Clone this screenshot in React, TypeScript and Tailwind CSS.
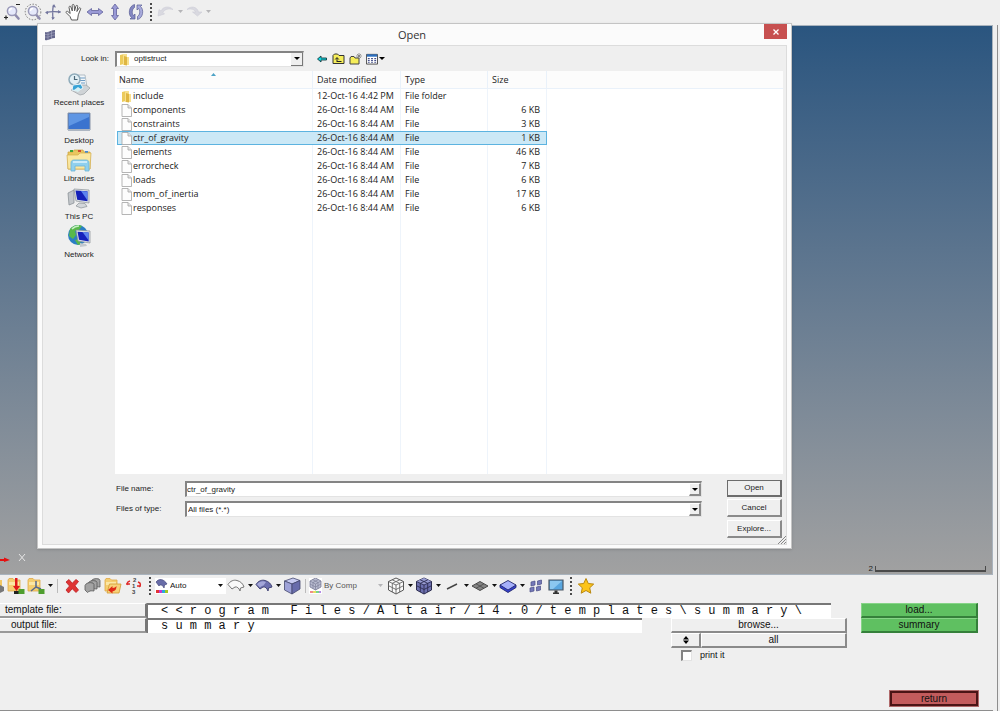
import { useState, type ReactNode } from "react";

const files = [
  { name: "include", date: "12-Oct-16 4:42 PM", type: "File folder", size: "" },
  { name: "components", date: "26-Oct-16 8:44 AM", type: "File", size: "6 KB" },
  { name: "constraints", date: "26-Oct-16 8:44 AM", type: "File", size: "3 KB" },
  { name: "ctr_of_gravity", date: "26-Oct-16 8:44 AM", type: "File", size: "1 KB" },
  { name: "elements", date: "26-Oct-16 8:44 AM", type: "File", size: "46 KB" },
  { name: "errorcheck", date: "26-Oct-16 8:44 AM", type: "File", size: "7 KB" },
  { name: "loads", date: "26-Oct-16 8:44 AM", type: "File", size: "6 KB" },
  { name: "mom_of_inertia", date: "26-Oct-16 8:44 AM", type: "File", size: "17 KB" },
  { name: "responses", date: "26-Oct-16 8:44 AM", type: "File", size: "6 KB" },
];

function Svg({ size = 18, children }: { size?: number; children: ReactNode }) {
  return (
    <svg width={size} height={size} viewBox="0 0 18 18" fill="none" aria-hidden="true">
      {children}
    </svg>
  );
}

function Tool({ label, children }: { label: string; children: ReactNode }) {
  return (
    <button aria-label={label} className="flex h-5 w-5 shrink-0 items-center justify-center">
      {children}
    </button>
  );
}

function Caret({ label = "More", faded = false }: { label?: string; faded?: boolean }) {
  return (
    <button aria-label={label} className="flex h-5 w-2 shrink-0 items-center justify-center">
      <svg width="5" height="3" viewBox="0 0 5 3" aria-hidden="true">
        <path d="M0 0h5L2.5 3z" fill={faded ? "#b5b5b8" : "#111"} />
      </svg>
    </button>
  );
}

function Dots() {
  return (
    <svg width="10" height="18" viewBox="0 0 10 18" className="shrink-0" aria-hidden="true">
      <path d="M4 0h2v2H4zM4 4h2v2H4zM4 8h2v2H4zM4 12h2v2H4zM4 16h2v2H4z" fill="#4a4a4a" />
    </svg>
  );
}

/* ---------- view toolbar ---------- */

function Lens({ dashed = false }: { dashed?: boolean }) {
  return (
    <Svg>
      {dashed && (
        <circle cx="9" cy="9" r="7.8" stroke="#777" strokeWidth="1" strokeDasharray="1.5 1.5" />
      )}
      <path d="M12 11.500l3.500 4" stroke="#8f8cae" strokeWidth="2.600" strokeLinecap="round" />
      <circle cx="9" cy="8" r="4.600" fill="#e6e9fb" stroke="#9a99b8" strokeWidth="1.500" />
      <path d="M6.500 8A2.500 2.500 0 0 1 9 5.500" stroke="#fff" strokeWidth="1.300" />
      {!dashed && <path d="M1 14.500h4M3 12.500v4M13 1.500h4" stroke="#222" strokeWidth="1.200" />}
    </Svg>
  );
}

function DoubleArrow({ vertical = false }: { vertical?: boolean }) {
  return (
    <Svg>
      <path
        d={
          vertical
            ? "M9 1l3.500 4.500h-2v7h2L9 17l-3.500-4.500h2v-7h-2z"
            : "M1 9l4.500-3.500v2h7v-2L17 9l-4.500 3.500v-2h-7v2z"
        }
        fill="#9a9ad6"
        stroke="#62629c"
        strokeWidth=".8"
      />
    </Svg>
  );
}

function CrossArrows() {
  return (
    <Svg>
      <path d="M9.500 2c-1 4-1 9-.5 14M2 9.500c4-1 9-1 14.500-.5" stroke="#74779f" strokeWidth="1.300" />
      <path d="M10 1l2 3.500-3.500-.5zM8.500 17l-1-3 3.500.5zM1 9.500L4 8v3.500zM17 9l-3-2v3.500z" fill="#74779f" />
    </Svg>
  );
}

function Hand() {
  return (
    <Svg>
      <path
        d="M6.500 17L5 13.500 1.300 9.800c-.8-1 .5-2.200 1.600-1.200l2.300 1.900L4 4.400c-.2-1.300 1.500-1.700 1.900-.4L7.300 8 7.200 2.500c0-1.400 1.900-1.400 2 0l.4 5.300 1.300-4.700c.4-1.300 2-.9 1.800.4l-.8 5 2-3.200c.7-1.100 2.200-.3 1.700.8l-2.300 5.700-.8 5.200z"
        fill="#fff"
        stroke="#5a5a5a"
        strokeWidth="1"
      />
    </Svg>
  );
}

function Rotate() {
  return (
    <Svg>
      <path
        d="M7.500 1.500C1.500 3 1 12 4.500 14.500L3 16h5v-5l-1.500 1.500C4.500 10 5 6 7.500 4.500z"
        fill="#8487c2"
        stroke="#585b93"
        strokeWidth=".7"
      />
      <path
        d="M10.500 16.500c6-1.500 6.500-10.500 3-13L15 2h-5v5l1.500-1.500c2 2.500 1.500 6.500-1 8z"
        fill="#a9abdc"
        stroke="#585b93"
        strokeWidth=".7"
      />
    </Svg>
  );
}

function Undo({ flip = false }: { flip?: boolean }) {
  return (
    <Svg>
      <path
        d={
          flip
            ? "M2 6.500c4-4 10-3 11.500 2.500H17l-4.500 4-5-4h3C9.500 6.500 6 5 2 6.500z"
            : "M16 6.500c-4-4-10-3-12 1.500L2 6.500 1 13l6.500-2-1.500-1.500C7.500 6.500 11 5 16 6.500z"
        }
        fill="#d9d9e0"
        stroke="#cccdd6"
        strokeWidth=".6"
      />
    </Svg>
  );
}

/* ---------- model toolbar ---------- */

function FolderTool({ kind }: { kind: "import" | "axes" | "open" }) {
  return (
    <Svg>
      <path d="M1 3l1-1.500h4L7.500 3H13v11H1z" fill="#f5ce70" stroke="#dfa947" strokeWidth=".8" />
      <path d="M2 5h10v3H2z" fill="#fbe7a6" />
      {kind === "import" && (
        <>
          <path d="M8 1h2.500v8H13l-3.500 5L6 9h2z" fill="#e01919" />
          <path d="M7 14h5v3H7z" fill="#222" />
          <path d="M11.500 12h6v5h-6z" fill="#4f9e2f" />
        </>
      )}
      {kind === "axes" && (
        <>
          <path d="M9 4v6l5 2M9 10l-5 4" stroke="#56688d" strokeWidth="1.500" />
          <path d="M11.500 12h6v5h-6z" fill="#4f9e2f" />
        </>
      )}
      {kind === "open" && (
        <>
          <path d="M3 16L5.500 7H17l-2 9z" fill="#f7d27a" stroke="#d39931" strokeWidth=".8" />
          <path d="M4 13l4.500-4v2c2 0 3-1 4-2 0 3-1 5-4 5.500v2z" fill="#e02a17" />
        </>
      )}
    </Svg>
  );
}

function RedX() {
  return (
    <Svg>
      <path
        d="M3 5l3-2.500 3.200 3.700L13 2.500l2.500 2L12 8.800l3.500 4.200-2.500 2.500-3.800-3.800L5.500 16 3 13l3.500-4z"
        fill="#df3434"
        stroke="#bd1f22"
        strokeWidth=".8"
      />
    </Svg>
  );
}

function Stack() {
  const leaf = "M1 6.500C2 4 5 3 9 4l1 1.500v6.500c-3-.5-5 0-6.500 1.500L1 11z";
  return (
    <Svg>
      <g fill="#a3a3a3" stroke="#595959" strokeWidth=".8">
        <path d={leaf} transform="translate(7 -2)" />
        <path d={leaf} transform="translate(4 0)" />
        <path d={leaf} transform="translate(1 2)" />
      </g>
    </Svg>
  );
}

function Renumber() {
  return (
    <svg width="18" height="18" viewBox="0 0 18 18" aria-hidden="true">
      <g fontFamily="Liberation Sans, sans-serif" fontSize="6" fontWeight="bold" fill="#444">
        <text x="8" y="5">2</text>
        <text x="7" y="11">1</text>
        <text x="7" y="17">3</text>
      </g>
      <path d="M5 4C2 5 2 6 3 8M1 7h4M13 5c3 1 3 3 1 5M12 9h4" stroke="#df2b2b" strokeWidth="1.500" fill="none" />
    </svg>
  );
}

function Surface({ filled = false }: { filled?: boolean }) {
  return (
    <Svg>
      <path
        d="M1 7.500C3 4 7 2.500 10 3.500c4 1 6 3.500 7 6.500l-3.500 1-.5 3c-1-3-3-4.500-5-4l-3 2z"
        fill={filled ? "#6c6fae" : "#fafafa"}
        stroke={filled ? "#444677" : "#777"}
        strokeWidth="1"
      />
      {filled && <path d="M2 7.500C4 4.500 8 3.500 11 5L8.500 8.500C7 8.500 6 9.500 5 10.500z" fill="#a3a6d8" />}
    </Svg>
  );
}

function Cube() {
  return (
    <Svg>
      <g stroke="#44476f" strokeWidth=".8">
        <path d="M10 1l7 2.500L9 7 1.500 4z" fill="#c7cbf1" />
        <path d="M1.500 4L9 7v10l-7.500-4z" fill="#9ea2d8" />
        <path d="M17 3.500L9 7v10l8-5z" fill="#686cab" />
      </g>
    </Svg>
  );
}

function MeshCube({ filled = false }: { filled?: boolean }) {
  return (
    <Svg>
      <path
        d="M9 1l7.500 3.500v8.500L9 17l-7.500-4V4.500z"
        fill={filled ? "#6e71b0" : "#fafafa"}
        stroke={filled ? "#2c2d50" : "#555"}
      />
      {filled && <path d="M9 1l7.500 3.500L9 8 1.500 4.500z" fill="#9a9ed4" />}
      <path
        d="M1.500 4.500L9 8l7.500-3.500M9 8v9M5.200 2.800l7.500 3.500v8.700M12.800 2.800L5.300 6.300v8.700M1.500 8.700L9 12.500l7.500-3.800"
        stroke={filled ? "#2c2d50" : "#666"}
        strokeWidth=".9"
      />
    </Svg>
  );
}

function Monitor() {
  return (
    <Svg>
      <path d="M2 3h14v10H2z" fill="#59a6df" stroke="#4a5664" strokeWidth="1.200" />
      <path d="M3 4h12L6 12H3z" fill="#8cc8f0" />
      <path d="M7.500 13.500h3V16h-3zM6 15.500h6V17H6z" fill="#333" />
    </Svg>
  );
}

function Plate({ blue = false }: { blue?: boolean }) {
  return (
    <Svg>
      {blue ? (
        <g stroke="#23276b" strokeWidth=".9">
          <path d="M1 8v2.500l8 5 8-5V8z" fill="#3440d0" />
          <path d="M9 3.500L17 8l-8 5-8-5z" fill="#a6b0fa" />
        </g>
      ) : (
        <>
          <path d="M9 4.500L17 9l-8 4.500L1 9z" fill="#848484" stroke="#4a4a4a" />
          <path d="M5 6.800l8 4.500M13 6.800l-8 4.500" stroke="#4a4a4a" strokeWidth=".8" />
        </>
      )}
    </Svg>
  );
}

/* ---------- dialog drawings ---------- */

function Folder() {
  return (
    <svg width="11" height="13" viewBox="0 0 11 13" className="shrink-0" aria-hidden="true">
      <path d="M1 2l4-1v10l-4 1z" fill="#eccb5c" />
      <path d="M4 1h4v3h2v8H4z" fill="#f7e08e" />
      <path d="M5 3l3 1v8.500L5 12z" fill="#dfb641" />
    </svg>
  );
}

function Sheet() {
  return (
    <svg width="11" height="13" viewBox="0 0 11 13" className="shrink-0" aria-hidden="true">
      <path d="M1 .5h6L10.500 4v8.500H1z" fill="#fdfdfd" stroke="#adadad" strokeWidth=".9" />
      <path d="M7 .5V4h3.500" fill="#e4e4e4" stroke="#adadad" strokeWidth=".9" />
    </svg>
  );
}

function RecentIcon() {
  return (
    <svg width="26" height="24" viewBox="0 0 26 24" aria-hidden="true">
      <path d="M10 3h9l2 12-11 1z" fill="#f2f6f9" stroke="#9aa7b1" strokeWidth=".7" />
      <path d="M14 6h5M14 8.500h5M15 11h4" stroke="#6d9bc4" />
      <circle cx="8.500" cy="7.500" r="5.500" fill="#e1eff5" stroke="#8fabba" strokeWidth="1.500" />
      <path d="M8.500 4v3.500h3" stroke="#4c6878" strokeWidth="1.200" fill="none" />
      <path d="M5 18l5-5h10l4 3-6 6-4 1z" fill="#cfd3d6" stroke="#9a9fa3" strokeWidth=".7" />
      <path d="M7 13l8-1 2 4-5 3-6-1z" fill="#37a3d6" stroke="#e9f5fa" />
      <path d="M8 18l4-3 3 2-3 3z" fill="#d5f0f5" />
    </svg>
  );
}

function DesktopIcon() {
  return (
    <svg width="24" height="20" viewBox="0 0 24 20" aria-hidden="true">
      <path d="M1 1h22v17H1z" fill="#3a73cf" stroke="#8794a8" />
      <path d="M2 2h20v3L2 14z" fill="#5f96e4" />
      <path d="M1 17h22v2H1z" fill="#adb6c2" />
    </svg>
  );
}

function LibrariesIcon() {
  return (
    <svg width="26" height="24" viewBox="0 0 26 24" aria-hidden="true">
      <path d="M2 4h5l1-2h9l1 2h6v17H2z" fill="#e9c65f" stroke="#c9a03e" strokeWidth=".7" />
      <path d="M4 2h3v2H4z" fill="#3ca53a" />
      <path d="M12 2h3v2h-3z" fill="#d14b31" />
      <path d="M19 3h3v2h-3z" fill="#418ad3" />
      <path d="M1 7h11l2-2h11l-1 16H2z" fill="#fae7a0" stroke="#d2ac4c" strokeWidth=".7" />
      <path d="M5 23v-8c0-2 1-3 3-3h12c2 0 3 1 3 3v8h-4v-5H9v5z" fill="#8fd0ee" stroke="#6db4d6" strokeWidth=".8" />
      <path d="M7 14h14" stroke="#dff4fd" strokeWidth="1.500" />
    </svg>
  );
}

function PcIcon() {
  return (
    <svg width="24" height="21" viewBox="0 0 24 21" aria-hidden="true">
      <path d="M1 5l6-3v13l-5 2z" fill="#c3c7cb" stroke="#83898f" strokeWidth=".7" />
      <path d="M7 1l15 1v13L9 13z" fill="#dfe3e6" stroke="#8a9097" strokeWidth=".7" />
      <path d="M8.500 2.500L20.500 3.300v10L10.200 11.800z" fill="#1420b8" />
      <path d="M14 3l6.500.5v9z" fill="#5c83ee" />
      <path d="M12 15l6 .5 2 3-6 1.500-5-2z" fill="#d3d7da" stroke="#8a9097" strokeWidth=".7" />
    </svg>
  );
}

function NetworkIcon() {
  return (
    <svg width="25" height="24" viewBox="0 0 25 24" aria-hidden="true">
      <circle cx="11" cy="11" r="10" fill="#2b7fc4" />
      <path d="M3 5c3-4 9-5 12-3l-3 4-4 1 1 4-3 4-4-3zM8 16l4-1 2 5-3 1z" fill="#58b84b" />
      <path d="M5 5c2-2 5-3 7-3" stroke="#c5efc4" strokeWidth="1.500" fill="none" />
      <path d="M9 6l14 1v12l-12-2z" fill="#dfe3e6" stroke="#8a9097" strokeWidth=".7" />
      <path d="M10.500 7.700L21.700 8.400v9L12 15.800z" fill="#1722bc" />
      <path d="M15.500 8l6.200.5v8z" fill="#5f86ee" />
      <path d="M13 19l6 1 1 2-7 1z" fill="#c4c9cd" />
    </svg>
  );
}

const places = [
  { label: "Recent places", icon: <RecentIcon /> },
  { label: "Desktop", icon: <DesktopIcon /> },
  { label: "Libraries", icon: <LibrariesIcon /> },
  { label: "This PC", icon: <PcIcon /> },
  { label: "Network", icon: <NetworkIcon /> },
];

const sunken =
  "border-t-2 border-l-2 border-r border-b border-t-[#848484] border-l-[#848484] border-r-[#e3e3e3] border-b-[#e3e3e3] bg-white";
const raised =
  "border-t border-l border-r-2 border-b-2 border-t-white border-l-white border-r-[#8a8a8a] border-b-[#8a8a8a] bg-[#efefef]";

function DropArrow() {
  return (
    <span
      className={`pointer-events-none absolute top-0.5 right-px bottom-px flex w-3 items-center justify-center ${raised}`}
    >
      <svg width="6" height="3" viewBox="0 0 6 3" className="shrink-0" aria-hidden="true">
        <path d="M0 0h6L3 3z" fill="#000" />
      </svg>
    </span>
  );
}

function OpenDialog() {
  const [selected, setSelected] = useState("ctr_of_gravity");
  const heading = "border-r border-b border-[#e9f1fa] bg-[#fcfcfc] p-0 pl-1 font-normal";

  return (
    <section
      role="dialog"
      aria-labelledby="dialog-title"
      className="absolute -top-[3px] right-[200px] left-[37px] border border-[#c4c4c4] bg-[#fbfbfb] px-1 pb-[3px] font-['Liberation_Sans',Arial,sans-serif] text-[8px] text-[#222] shadow-sm"
    >
      <header className="flex h-[21px] items-center justify-between pl-0.5">
        <svg width="12" height="12" viewBox="0 0 12 12" aria-hidden="true">
          <path d="M1 3c4 1 6-2 10-2v8c-4 0-6 3-10 2z" fill="#65678c" />
          <path d="M1 5.500c4 1 6-2 10-2M1 8c4 1 6-2 10-2M4 3v8M7.500 2v8" stroke="#b5b6ce" strokeWidth=".5" fill="none" />
        </svg>
        <h1 id="dialog-title" className="pl-1 font-['Open_Sans',sans-serif] text-[11px] leading-4 text-[#333]">
          Open
        </h1>
        <button aria-label="Close" className="flex h-[15px] w-[23px] items-center justify-center self-start bg-[#c75050]">
          <svg width="6" height="6" viewBox="0 0 6 6" aria-hidden="true">
            <path d="M.5.5l5 5M5.500.5l-5 5" stroke="#fff" strokeWidth="1.300" />
          </svg>
        </button>
      </header>

      <div className="relative border border-[#dcdcdc] bg-[#efefef]">
        <div className="flex h-[25px] items-center">
          <label htmlFor="look-in" className="w-[72px] shrink-0 pr-1.5 text-right">
            Look in:
          </label>
          <div className={`relative flex h-4 w-[189px] items-center pl-0.5 ${sunken}`}>
            <Folder />
            <select id="look-in" className="h-3 flex-1 appearance-none pl-1 outline-none">
              <option>optistruct</option>
            </select>
            <span className="pointer-events-none absolute inset-y-0 right-0 flex w-3 items-center justify-center border-r border-b border-[#777] bg-[#efefef]">
              <svg width="6" height="3" viewBox="0 0 6 3" aria-hidden="true">
                <path d="M0 0h6L3 3z" fill="#000" />
              </svg>
            </span>
          </div>
          <div className="flex items-center gap-1 pl-3">
            <button aria-label="Back">
              <svg width="12" height="12" viewBox="0 0 12 12" aria-hidden="true">
                <path d="M1.500 6L5 3v2h5.500v2H5v2z" fill="#12d5e0" stroke="#123c42" strokeWidth=".9" />
              </svg>
            </button>
            <button aria-label="Up one level">
              <svg width="13" height="12" viewBox="0 0 13 12" aria-hidden="true">
                <path d="M1 10.500V2.500L2.500 1h3L7 2.500h5v8z" fill="#f6ee5a" stroke="#333" />
                <path d="M5 8.500h4.500M5 9V5M3.200 6.500L5 4.500l1.800 2" stroke="#222" fill="none" />
              </svg>
            </button>
            <button aria-label="New folder">
              <svg width="13" height="12" viewBox="0 0 13 12" aria-hidden="true">
                <path d="M1 11V5l1-1.500h3L6 5h4v6z" fill="#f6ee5a" stroke="#444" />
                <path d="M10 0v6M7 3h6M8 1l4 4M12 1L8 5" stroke="#777" strokeWidth=".7" />
              </svg>
            </button>
            <button aria-label="View menu" className="flex items-center gap-px">
              <svg width="12" height="12" viewBox="0 0 13 12" aria-hidden="true">
                <path d="M.5 1h12v10.500H.5z" fill="#fff" stroke="#444" />
                <path d="M1 1h11v2.500H1z" fill="#2b6fc0" />
                <path d="M2 5.500h2M2 7.500h2M2 9.500h2M5.500 5.500h2M5.500 7.500h2M5.500 9.500h2M9 5.500h2M9 7.500h2M9 9.500h2" stroke="#45508a" strokeWidth="1.200" />
              </svg>
              <svg width="6" height="3" viewBox="0 0 6 3" aria-hidden="true">
                <path d="M0 0h6L3 3z" fill="#000" />
              </svg>
            </button>
          </div>
        </div>

        <div className="flex pr-[3px]">
          <nav className="flex w-[72px] shrink-0 flex-col">
            {places.map((place) => (
              <button key={place.label} className="flex h-[38px] flex-col items-center">
                <span className="flex h-[26px] items-center justify-center">{place.icon}</span>
                <span className="leading-3 whitespace-nowrap">{place.label}</span>
              </button>
            ))}
          </nav>

          <div className="h-[403px] flex-1 bg-white pl-0.5 font-['Open_Sans','Noto_Sans',sans-serif] text-[9px]">
            <table className="h-full w-full table-fixed border-separate border-spacing-0 text-left leading-3">
              <colgroup>
                <col className="w-[196px]" />
                <col className="w-[88px]" />
                <col className="w-[87px]" />
                <col className="w-[59px]" />
                <col />
              </colgroup>
              <thead>
                <tr className="h-[18px]">
                  <th className="relative border-r border-b border-[#e9f1fa] bg-[#fcfcfc] p-0 pl-0.5 font-normal">
                    Name
                    <svg width="5" height="3" viewBox="0 0 5 3" className="absolute top-0.5 left-[94px]" aria-hidden="true">
                      <path d="M0 3h5L2.500 0z" fill="#4da3c6" />
                    </svg>
                  </th>
                  <th className={heading}>Date modified</th>
                  <th className={heading}>Type</th>
                  <th className={heading}>Size</th>
                  <td className="border-b border-[#e9f1fa] bg-[#fcfcfc] p-0" />
                </tr>
              </thead>
              <tbody>
                {files.map((file) => {
                  const active = file.name === selected;
                  const cell = active
                    ? "border-y border-y-[#5cb3e0] bg-[#cbe8f6] p-0"
                    : "border-r border-r-[#eef4fb] p-0";
                  return (
                    <tr key={file.name} className="h-3.5" onClick={() => setSelected(file.name)}>
                      <td className={`${cell} ${active ? "border-l border-l-[#5cb3e0] pl-[3px]" : "pl-1"}`}>
                        <div className="flex h-3 items-center gap-px">
                          {file.type === "File" ? <Sheet /> : <Folder />}
                          {file.name}
                        </div>
                      </td>
                      <td className={`${cell} pl-1 whitespace-nowrap`}>{file.date}</td>
                      <td className={`${cell} pl-1`}>{file.type}</td>
                      <td className={`${cell} pr-1.5 text-right ${active ? "border-r border-r-[#5cb3e0]" : ""}`}>
                        {file.size}
                      </td>
                      <td className="p-0" />
                    </tr>
                  );
                })}
                <tr>
                  <td className="border-r border-[#eef4fb] p-0" />
                  <td className="border-r border-[#eef4fb] p-0" />
                  <td className="border-r border-[#eef4fb] p-0" />
                  <td className="border-r border-[#eef4fb] p-0" />
                  <td className="p-0" />
                </tr>
              </tbody>
            </table>
          </div>
        </div>

        <div className="flex pt-1.5 pr-1 pb-1.5 pl-[73px]">
          <div className="flex flex-1 flex-col gap-1 pt-px pr-[25px]">
            <div className="flex items-center">
              <label htmlFor="file-name" className="w-[69px] shrink-0">
                File name:
              </label>
              <div className="relative flex-1">
                <input
                  id="file-name"
                  value={selected}
                  onChange={(e) => setSelected(e.target.value)}
                  className={`block h-4 w-full pr-4 outline-none ${sunken}`}
                />
                <DropArrow />
              </div>
            </div>
            <div className="flex items-center">
              <label htmlFor="file-type" className="w-[69px] shrink-0">
                Files of type:
              </label>
              <div className="relative flex-1">
                <select id="file-type" className={`block h-4 w-full appearance-none pl-px outline-none ${sunken}`}>
                  <option>All files (*.*)</option>
                </select>
                <DropArrow />
              </div>
            </div>
          </div>
          <div className="flex w-[55px] flex-col">
            <button className="h-[17px] border border-r-2 border-b-2 border-[#6c6c6c] bg-[#efefef]">Open</button>
            <button className={`mt-0.5 h-[18px] ${raised}`}>Cancel</button>
            <button className={`mt-[3px] h-[18px] ${raised}`}>Explore...</button>
          </div>
        </div>
        <svg width="9" height="9" viewBox="0 0 9 9" className="absolute right-0 bottom-0" aria-hidden="true">
          <path d="M1 9l8-8M4 9l5-5M7 9l2-2" stroke="#888" />
        </svg>
      </div>
    </section>
  );
}

export default function App() {
  const [printIt, setPrintIt] = useState(false);
  const green =
    "h-[15px] w-full border-t border-l border-r-2 border-b-2 border-t-[#86d487] border-l-[#86d487] border-r-[#35803a] border-b-[#35803a] bg-[#5fc061]";
  const fieldLabel =
    "h-[15px] w-[147px] shrink-0 border-t border-r-2 border-b-2 border-t-white border-r-[#777] border-b-[#999]";
  const field =
    "h-[15px] min-w-0 flex-1 border-t-2 border-l border-[#777] bg-white pb-0.5 pl-[13px] font-['Liberation_Mono',monospace] text-[12px] leading-3 outline-none";

  return (
    <div className="flex min-h-screen flex-col bg-[#efefef] font-['Liberation_Sans',Arial,sans-serif] text-[10px] leading-3 text-[#111]">
      <div className="flex h-[25px] items-center pb-0.5 pl-0.5">
        <div className="flex w-[144px] justify-between">
          <Tool label="Zoom"><Lens /></Tool>
          <Tool label="Fit"><Lens dashed /></Tool>
          <Tool label="Pan centre"><CrossArrows /></Tool>
          <Tool label="Pan"><Hand /></Tool>
          <Tool label="Rotate left and right"><DoubleArrow /></Tool>
          <Tool label="Rotate up and down"><DoubleArrow vertical /></Tool>
          <Tool label="Spin"><Rotate /></Tool>
        </div>
        <Dots />
        <Tool label="Undo"><Undo /></Tool>
        <Caret label="Undo list" faded />
        <Tool label="Redo"><Undo flip /></Tool>
        <Caret label="Redo list" faded />
      </div>

      <div className="flex flex-1">
        <div className="flex min-w-0 flex-1 flex-col">
          <main className="relative h-[550px] border-t border-r border-b border-[#a9b3bd] bg-linear-to-b from-[#2a557f] to-[#a1a1a1]">
            <OpenDialog />
            <svg width="28" height="12" viewBox="0 0 28 12" className="absolute bottom-2 left-0" aria-hidden="true">
              <path d="M0 5h4V3.500L10 6 4 8V7H0z" fill="#e51010" />
              <path d="M19 0l6 7M25 0l-6 7" stroke="#e6e6e6" strokeWidth="1" />
            </svg>
            <div className="absolute right-1.5 bottom-px flex items-end gap-0.5 text-[8px] leading-[9px] text-[#222]">
              2
              <span className="mb-px h-1.5 w-[111px] border-x border-b-2 border-[#4a4a4a]" />
            </div>
          </main>

          <div className="flex h-[23px] items-center pb-0.5">
            <div className="h-5 w-1.5 overflow-hidden">
              <svg width="6" height="20" viewBox="0 0 6 20" aria-hidden="true">
                <path d="M0 4h2v6H0z" fill="#f2c762" />
                <path d="M0 9l4 2v4l-4 2z" fill="#777" />
              </svg>
            </div>
            <Tool label="Import"><FolderTool kind="import" /></Tool>
            <Tool label="Organize"><FolderTool kind="axes" /></Tool>
            <Caret />
            <span className="mx-[3px] h-3.5 w-0.5 border-l border-[#bbb]" />
            <Tool label="Delete"><RedX /></Tool>
            <div className="flex gap-px pr-px">
              <Tool label="Cards"><Stack /></Tool>
              <Tool label="Open model"><FolderTool kind="open" /></Tool>
              <Tool label="Renumber"><Renumber /></Tool>
            </div>
            <Dots />
            <div className="relative flex h-4 w-[71px] items-center bg-white text-[8px]">
              <svg width="13" height="16" viewBox="0 0 13 16" className="shrink-0" aria-hidden="true">
                <path d="M1 4c3-4 8-3 11 2L9.500 7 9 10C8 7 5 6 4 8z" fill="#686ca8" stroke="#45487c" strokeWidth=".7" />
                <path d="M1 12h3v3H1z" fill="#e23434" />
                <path d="M4 12h3v3H4z" fill="#c937cf" />
                <path d="M7 12h3v3H7z" fill="#2aa9dc" />
                <path d="M10 12h3v3h-3z" fill="#a5c823" />
              </svg>
              <select aria-label="Geometry colour" className="h-4 flex-1 appearance-none pl-0.5 outline-none">
                <option>Auto</option>
              </select>
              <span className="pointer-events-none absolute right-0.5"><Caret label="Geometry colours" /></span>
            </div>
            <Tool label="Wireframe geometry"><Surface /></Tool>
            <Caret />
            <Tool label="Shaded geometry"><Surface filled /></Tool>
            <Caret />
            <Tool label="Transparency"><Cube /></Tool>
            <span className="mx-[3px] h-3.5 w-px bg-[#bbb]" />
            <div className="relative flex h-4 w-[77px] items-center text-[8px] text-[#555]">
              <svg width="13" height="16" viewBox="0 0 13 16" className="shrink-0" aria-hidden="true">
                <path d="M0 0h13v16H0z" fill="#fff" />
                <path d="M6.500 0L12 3v6l-5.500 3L1 9V3z" fill="#b8bbd0" stroke="#777a94" strokeWidth=".8" />
                <path d="M1 3l5.500 3L12 3M6.500 6v6M1 6l5.500 3L12 6M3.500 1.500L9 4.500v6M9.500 1.500L4 4.500v6" stroke="#777a94" strokeWidth=".6" fill="none" />
                <path d="M1 13h3v2H1z" fill="#ef8b8b" />
                <path d="M4 13h3v2H4z" fill="#e6dc62" />
                <path d="M7 13h3v2H7z" fill="#78d38c" />
                <path d="M10 13h2v2h-2z" fill="#b48be6" />
              </svg>
              <select aria-label="Element colour" className="h-4 flex-1 appearance-none pl-0.5 outline-none">
                <option>By Comp</option>
              </select>
              <span className="pointer-events-none absolute right-0.5"><Caret label="Element colours" faded /></span>
            </div>
            <Tool label="Wireframe elements"><MeshCube /></Tool>
            <Caret />
            <Tool label="Shaded elements"><MeshCube filled /></Tool>
            <Caret />
            <Tool label="1D elements">
              <Svg><path d="M4 12l10-5" stroke="#444" strokeWidth="1.500" /></Svg>
            </Tool>
            <Caret />
            <Tool label="2D elements"><Plate /></Tool>
            <Caret />
            <Tool label="Layers"><Plate blue /></Tool>
            <Caret />
            <Tool label="Shrink elements">
              <Svg>
                <path
                  d="M4 5l4-1v4l-4 1zM10.500 4l4-1v4l-4 1zM3 11l4-1v4l-4 1zM9.500 10l4-1v4l-4 1z"
                  fill="#7478b8"
                  stroke="#4b4e86"
                  strokeWidth=".7"
                />
              </Svg>
            </Tool>
            <Tool label="Visualization"><Monitor /></Tool>
            <Dots />
            <Tool label="Favorites">
              <Svg>
                <path
                  d="M9 1.500l2.300 5 5.400.6-4 3.700 1.100 5.400L9 13.500l-4.800 2.700 1.100-5.400-4-3.700 5.400-.6z"
                  fill="#fcc419"
                  stroke="#b9870f"
                />
              </Svg>
            </Tool>
          </div>

          <div className="flex flex-1 gap-3.5 border-b border-[#8e8e8e] pt-[5px] pr-[15px]">
            <div className="flex min-w-0 flex-1 flex-col">
              <div className="flex pr-4">
                <label htmlFor="template-file" className={`pl-[5px] ${fieldLabel}`}>
                  template file:
                </label>
                <input
                  id="template-file"
                  defaultValue={"< < r o g r a m   F i l e s / A l t a i r / 1 4 . 0 / t e m p l a t e s \\ s u m m a r y \\"}
                  className={field}
                />
              </div>
              <div className="flex">
                <label htmlFor="output-file" className={`pl-[11px] ${fieldLabel}`}>
                  output file:
                </label>
                <input id="output-file" defaultValue="s u m m a r y" className={`mr-[29px] ${field}`} />
                <button className={`h-[15px] w-[176px] leading-3 ${raised}`}>browse...</button>
              </div>
              <div className="flex w-[176px] flex-col self-end">
                <div className="flex">
                  <button aria-label="Switch entity" className={`flex h-[15px] w-[30px] items-center justify-center ${raised}`}>
                    <svg width="6" height="8" viewBox="0 0 6 8" aria-hidden="true">
                      <path d="M0 3.500L3 0l3 3.500zM0 4.500h6L3 8z" fill="#000" />
                    </svg>
                  </button>
                  <button className={`h-[15px] flex-1 leading-3 ${raised}`}>all</button>
                </div>
                <label className="flex items-center gap-2 pt-px pl-2.5 text-[9px]">
                  <input
                    type="checkbox"
                    checked={printIt}
                    onChange={(e) => setPrintIt(e.target.checked)}
                    className={`size-[11px] appearance-none checked:bg-[#333] ${sunken}`}
                  />
                  print it
                </label>
              </div>
            </div>

            <div className="flex w-[117px] shrink-0 flex-col items-end pb-1">
              <button className={`leading-3 ${green}`}>load...</button>
              <button className={`leading-3 ${green}`}>summary</button>
              <button className="mt-auto h-[15px] w-[88px] border-2 border-[#4a1415] bg-[#c25b5c] leading-[11px] outline outline-[#b06a6b]">
                return
              </button>
            </div>
          </div>
        </div>
        <div className="mr-0.5 w-[5px] border-r border-[#8e8e8e]" />
      </div>
    </div>
  );
}
